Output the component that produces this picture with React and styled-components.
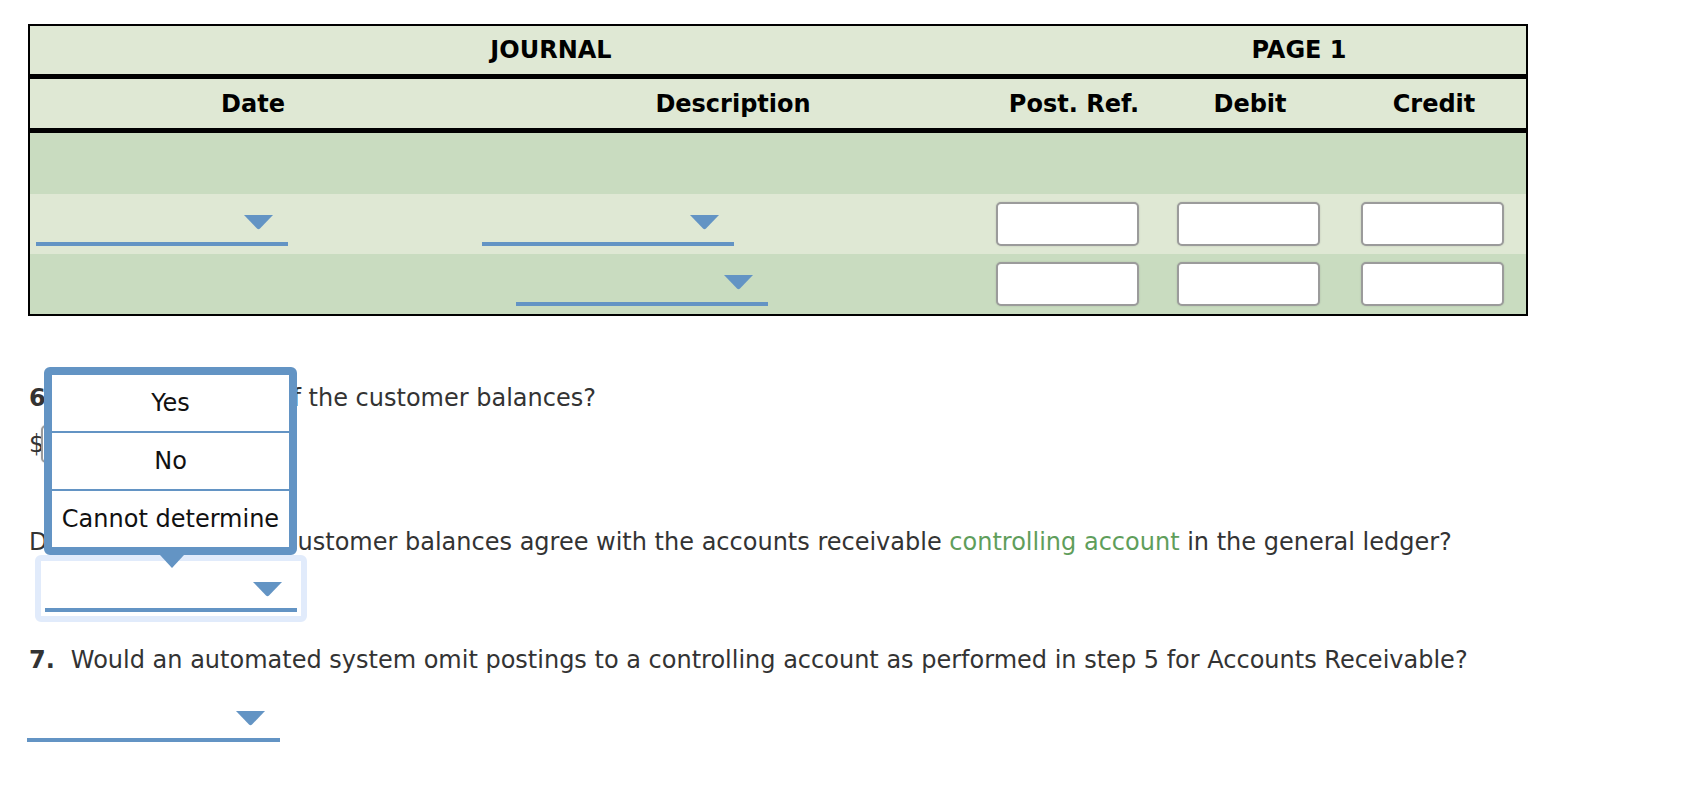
import React from 'react';
import styled, { createGlobalStyle } from 'styled-components';

const GlobalStyle = createGlobalStyle`
    html, body {
        margin: 0;
        padding: 0;
        background: #fff;
    }
    body {
        font-family: "DejaVu Sans", Verdana, sans-serif;
        color: #333;
    }
`;

const BLUE = '#6394c4';
const LIGHT = '#dfe8d4';
const DARK = '#c9dcc0';
const COLS = '446px 514px 168px 184px 184px';

const Page = styled.div`
    padding: 24px 0 40px 28px;
`;

const Journal = styled.div`
    width: 1496px;
    border: 2px solid #000;
    background: ${LIGHT};
`;

const TitleRow = styled.div`
    display: flex;
    height: 48px;
    border-bottom: 5px solid #000;
`;

const TitleCell = styled.div`
    width: ${p => p.$w}px;
    display: flex;
    align-items: center;
    justify-content: center;
    font-weight: bold;
    font-size: 24px;
    color: #000;
`;

const HeadRow = styled.div`
    display: grid;
    grid-template-columns: ${COLS};
    height: 49px;
    border-bottom: 5px solid #000;
`;

const HeadCell = styled.div`
    display: flex;
    align-items: center;
    justify-content: center;
    font-weight: bold;
    font-size: 24px;
    color: #000;
`;

const BodyRow = styled.div`
    display: grid;
    grid-template-columns: ${COLS};
    height: ${p => p.$h}px;
    background: ${p => (p.$shade ? DARK : LIGHT)};
`;

const SelectCell = styled.div`
    display: flex;
    align-items: flex-end;
    padding: 0 0 8px ${p => p.$indent || 0}px;
`;

const InputCell = styled.div`
    display: flex;
    align-items: center;
    padding-left: ${p => p.$pad}px;
`;

const Select = styled.div`
    box-sizing: border-box;
    width: ${p => p.$w || 252}px;
    height: ${p => p.$h || 40}px;
    display: flex;
    justify-content: flex-end;
    align-items: flex-end;
    padding: 0 15px ${p => p.$gap || 12}px 0;
    border-bottom: 4px solid ${BLUE};
    margin-left: ${p => p.$shift || 0}px;
`;

const AmountInput = styled.div`
    box-sizing: border-box;
    width: ${p => p.$w || 143}px;
    height: ${p => p.$h || 44}px;
    margin-left: ${p => p.$shift || 0}px;
    background: #fff;
    border: 2px solid #9b9b9b;
    border-radius: 5px;
    box-shadow: 0 0 2px rgba(0, 0, 0, 0.15);
`;

const Questions = styled.div`
    font-size: 24px;
    line-height: 30px;
    padding-left: 1px;
`;

const Line = styled.div`
    margin-top: ${p => p.$top}px;
    white-space: nowrap;
`;

const Num = styled.b`
    display: inline-block;
    margin-right: 16px;
    color: #333;
`;

const Link = styled.span`
    color: #5f9e5b;
`;

const DollarRow = styled.div`
    display: flex;
    align-items: center;
    margin-top: 12px;
    height: 38px;
`;

const FocusBox = styled.div`
    position: relative;
    box-sizing: border-box;
    width: 272px;
    margin: -2px 0 0 6px;
    padding: 4px;
    border: 6px solid #e1ebfb;
    border-radius: 6px;
    background: #fff;
`;

const Menu = styled.div`
    position: absolute;
    left: 3px;
    bottom: calc(100% + 6px);
    box-sizing: border-box;
    width: 253px;
    border: 8px solid ${BLUE};
    border-radius: 6px;
    background: #fff;
    z-index: 5;
`;

const MenuItem = styled.div`
    height: 56px;
    display: flex;
    align-items: center;
    justify-content: center;
    font-size: 24px;
    color: #111;
    border-top: ${p => (p.$first ? 'none' : `2px solid ${BLUE}`)};
`;

const Pointer = styled.div`
    position: absolute;
    top: calc(100% + 8px);
    left: 108px;
    width: 0;
    height: 0;
    border-left: 12px solid transparent;
    border-right: 12px solid transparent;
    border-top: 13px solid ${BLUE};
`;

const Arrow = () => (
    <svg width="29" height="15" viewBox="0 0 29 15">
        <path d="M0 0 H29 L16 13.5 Q14.5 15 13 13.5 Z" fill={BLUE} />
    </svg>
);

function App() {
    const inputs = (
        <>
            <InputCell $pad={6}><AmountInput /></InputCell>
            <InputCell $pad={19}><AmountInput /></InputCell>
            <InputCell $pad={19}><AmountInput /></InputCell>
        </>
    );

    return (
        <>
            <GlobalStyle />
            <Page>
                <Journal>
                    <TitleRow>
                        <TitleCell $w={1042}>JOURNAL</TitleCell>
                        <TitleCell $w={454}>PAGE 1</TitleCell>
                    </TitleRow>
                    <HeadRow>
                        <HeadCell>Date</HeadCell>
                        <HeadCell>Description</HeadCell>
                        <HeadCell>Post. Ref.</HeadCell>
                        <HeadCell>Debit</HeadCell>
                        <HeadCell>Credit</HeadCell>
                    </HeadRow>
                    <BodyRow $h={61} $shade />
                    <BodyRow $h={60}>
                        <SelectCell $indent={6}><Select><Arrow /></Select></SelectCell>
                        <SelectCell $indent={6}><Select><Arrow /></Select></SelectCell>
                        {inputs}
                    </BodyRow>
                    <BodyRow $h={60} $shade>
                        <SelectCell />
                        <SelectCell $indent={40}><Select><Arrow /></Select></SelectCell>
                        {inputs}
                    </BodyRow>
                </Journal>

                <Questions>
                    <Line $top={67}>
                        <Num>6.</Num>What is the total of the customer balances?
                    </Line>
                    <DollarRow>
                        $<AmountInput $w={170} $h={38} $shift={-3} />
                    </DollarRow>
                    <Line $top={64}>
                        Does the total of the customer balances agree with the accounts receivable{' '}
                        <Link>controlling account</Link> in the general ledger?
                    </Line>
                    <FocusBox>
                        <Menu>
                            <MenuItem $first>Yes</MenuItem>
                            <MenuItem>No</MenuItem>
                            <MenuItem>Cannot determine</MenuItem>
                            <Pointer />
                        </Menu>
                        <Select $h={47} $gap={11}><Arrow /></Select>
                    </FocusBox>
                    <Line $top={23}>
                        <Num>7.</Num>Would an automated system omit postings to a controlling account as performed in step 5 for Accounts Receivable?
                    </Line>
                    <div style={{ marginTop: 27 }}>
                        <Select $w={253} $shift={-2}><Arrow /></Select>
                    </div>
                </Questions>
            </Page>
        </>
    );
}

export default App;
